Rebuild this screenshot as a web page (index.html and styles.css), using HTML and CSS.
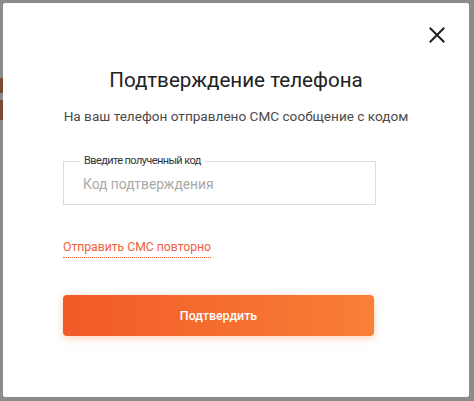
FILE: index.html
```html
<!DOCTYPE html>
<html lang="ru">
<head>
<meta charset="utf-8">
<link rel="stylesheet" href="styles.css">
</head>
<body>
<div class="backdrop">
  <span class="peek peek-a"></span>
  <span class="peek peek-b"></span>
</div>
<div class="modal">
  <div class="close-row">
    <button class="close" aria-label="Закрыть">
      <svg width="16" height="16" viewBox="0 0 16 16"><path d="M1.5 1.5L14.5 14.5M14.5 1.5L1.5 14.5" stroke="#1e1e1e" stroke-width="2" fill="none" stroke-linecap="square"/></svg>
    </button>
  </div>
  <h1 class="title">Подтверждение телефона</h1>
  <p class="subtitle">На ваш телефон отправлено СМС сообщение с кодом</p>
  <form class="form">
    <div class="field">
      <span class="field-label">Введите полученный код</span>
      <input class="field-input" type="text" placeholder="Код подтверждения">
    </div>
    <div class="resend-row"><a class="resend" href="#">Отправить СМС повторно</a></div>
    <button class="submit" type="button">Подтвердить</button>
  </form>
</div>
</body>
</html>
```
FILE: styles.css
```css
* { box-sizing: border-box; }
html, body { margin: 0; padding: 0; }
body {
  background: #8b8b8b;
  font-family: Roboto, "Noto Sans", "Liberation Sans", sans-serif;
  width: 474px;
  height: 401px;
  overflow: hidden;
  position: relative;
}
.backdrop { position: absolute; left: 0; top: 0; width: 3px; height: 401px; }
.peek { position: absolute; left: 0; width: 3px; background: #7a4a34; }
.peek-a { top: 78px; height: 15px; }
.peek-b { top: 100px; height: 20px; }
.modal {
  position: relative;
  margin: 3px 0 0 3px;
  width: 466px;
  height: 394px;
  background: #fff;
  border-radius: 2px;
  display: flex;
  flex-direction: column;
}
.close-row {
  display: flex;
  justify-content: flex-end;
  padding: 24px 24px 0 0;
}
.close {
  width: 16px;
  height: 16px;
  padding: 0;
  border: 0;
  background: none;
  display: block;
}
.close svg { display: block; }
.title {
  margin: 25px 0 0;
  text-align: center;
  font-size: 20.6px;
  line-height: 24px;
  font-weight: 400;
  color: #222;
}
.subtitle {
  margin: 14px 0 0;
  text-align: center;
  font-size: 13.6px;
  line-height: 20px;
  color: #4a4a4a;
}
.form {
  margin: 35px 0 0 60px;
  width: 313px;
  display: flex;
  flex-direction: column;
}
.field {
  position: relative;
  height: 44px;
  border: 1px solid #dcdcdc;
  display: flex;
  align-items: center;
}
.field-label {
  position: absolute;
  left: 16px;
  top: -9px;
  padding: 0 4px;
  background: #fff;
  font-size: 11px;
  letter-spacing: -0.6px;
  line-height: 16px;
  color: #333;
}
.field-input {
  border: 0;
  outline: none;
  width: 100%;
  padding: 2px 0 0 19px;
  font-family: inherit;
  font-size: 13.8px;
  color: #333;
  background: transparent;
}
.field-input::placeholder { color: #a9a9a9; }
.resend-row { margin-top: 33px; display: flex; }
.resend {
  font-size: 12.2px;
  line-height: 18px;
  color: #f0603c;
  text-decoration: none;
  border-bottom: 1px dotted #f0603c;
  padding-bottom: 1px;
}
.submit {
  margin-top: 37px;
  width: 311px;
  height: 41px;
  border: 0;
  border-radius: 4px;
  background: linear-gradient(90deg, #f15a28 0%, #f97f36 100%);
  box-shadow: 0 2px 8px rgba(249, 120, 50, 0.35);
  color: #fff;
  font-family: inherit;
  font-size: 12.4px;
  font-weight: 500;
}
```
